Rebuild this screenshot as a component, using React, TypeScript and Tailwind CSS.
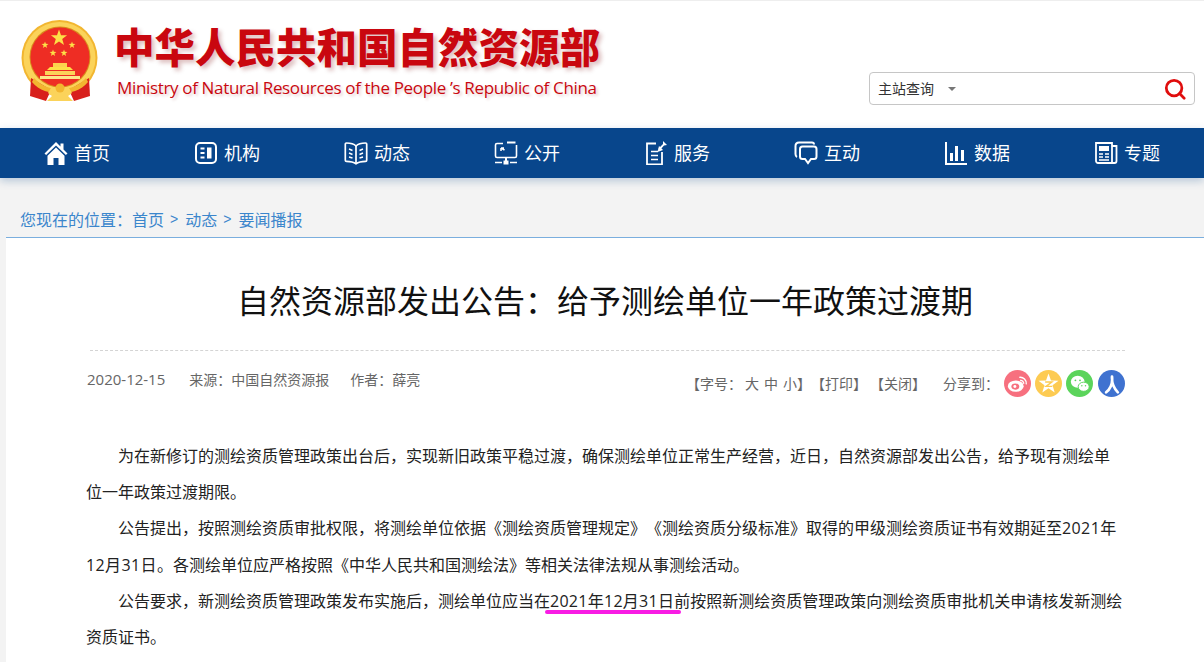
import React from 'react';

const cjk = "font-['Noto_Sans_CJK_SC','Noto_Sans',sans-serif]";
const latinFirst = "font-['Open_Sans','Noto_Sans_CJK_SC',sans-serif]";

const Star = ({ x, y, r, fill = '#fde047' }: { x: number; y: number; r: number; fill?: string }) => {
  const pts: string[] = [];
  for (let i = 0; i < 10; i++) {
    const rad = i % 2 === 0 ? r : r * 0.4;
    const a = (Math.PI / 5) * i - Math.PI / 2;
    pts.push(`${(x + rad * Math.cos(a)).toFixed(2)},${(y + rad * Math.sin(a)).toFixed(2)}`);
  }
  return <polygon points={pts.join(' ')} fill={fill} />;
};

const Emblem = () => (
  <svg viewBox="10 10 80 82" className="w-[80px] h-[82px] shrink-0">
    <circle cx="49.500" cy="48" r="38" fill="#f2b630" />
    <circle cx="49.500" cy="48" r="36" fill="#fbd35a" />
    <circle cx="50" cy="47" r="30.500" fill="#d98a1c" />
    <circle cx="50" cy="47" r="29.500" fill="#ee2d24" />
    <Star x={49} y={28} r={8.500} />
    <Star x={35} y={35} r={3.600} />
    <Star x={62} y={35} r={3.600} />
    <Star x={43} y={43} r={3.600} />
    <Star x={54} y={43} r={3.600} />
    {/* gate */}
    <path d="M40 57h20l3 3H37z" fill="#fde047" />
    <rect x="43" y="53" width="14" height="4" fill="#fcd34d" />
    <path d="M35 61h30v4H35z" fill="#fbd35a" />
    <path d="M30 66h40v3H30z" fill="#fde68a" />
    {/* drape */}
    <path d="M21 68l-1 18 16 5 5-11z" fill="#d8201c" />
    <path d="M79 68l1 18-16 5-5-11z" fill="#d8201c" />
    <path d="M24 68c8 9 18 11 26 11s18-2 26-11l2 4c-7 9-18 11-28 11s-21-2-28-11z" fill="#f2b630" />
    <path d="M41 78h18l3 5-4 3 5 5H37l5-5-4-3z" fill="#fbd35a" />
    <circle cx="50" cy="78" r="4.500" fill="#f2b630" />
  </svg>
);

const iconBase = 'w-[24px] h-[24px] shrink-0';

const HomeIcon = () => (
  <svg viewBox="0 0 24 24" className={iconBase} fill="#fff">
    <path d="M12 1L0.500 12.500l1.600 1.600L12 4.400l9.900 9.700 1.600-1.600L19.500 8.600V2.500h-3v3.100z" />
    <path d="M12 6.500L3.500 14.800V24h6v-7h5v7h6v-9.200z" />
  </svg>
);
const OrgIcon = () => (
  <svg viewBox="0 0 24 24" className={iconBase} fill="none" stroke="#fff" strokeWidth="2">
    <rect x="2" y="2" width="20" height="20" rx="4" />
    <path d="M6.500 7.500h4M6.500 12h4M6.500 16.500h4" strokeWidth="2.200" />
    <rect x="13" y="6.500" width="4.500" height="11" fill="#fff" stroke="none" />
  </svg>
);
const BookIcon = () => (
  <svg viewBox="0 0 24 24" className={iconBase} fill="none" stroke="#fff" strokeWidth="1.700">
    <path d="M12 5C10 3 6 2 2.500 2c-.8 0-1.200.5-1.200 1.200v16c0 .8.400 1.200 1.200 1.200 3.500 0 7 .6 9.500 2.400 2.500-1.800 6-2.400 9.500-2.400.8 0 1.200-.4 1.200-1.200v-16c0-.7-.4-1.200-1.200-1.200C18 2 14 3 12 5z" />
    <path d="M12 5v18" />
    <path d="M5 8l3.500 1.500M5 12l3.500 1.500M5 16l3.500 1M19 8l-3.500 1.500M19 12l-3.500 1.500M19 16l-3.500 1" strokeWidth="1.400" />
  </svg>
);
const OpenIcon = () => (
  <svg viewBox="0 0 24 24" className={iconBase} fill="none" stroke="#fff" strokeWidth="1.600">
    <path d="M9 2.500H3a1.500 1.500 0 0 0-1.500 1.500v11A1.500 1.500 0 0 0 3 16.500h18a1.500 1.500 0 0 0 1.500-1.500V4" />
    <path d="M13 1.500h8.500" strokeWidth="2" />
    <path d="M7 7l3.500 2M7 7v3M7 7h3" strokeWidth="1.500" />
    <path d="M12 16.500v4" strokeWidth="2" />
    <rect x="9.500" y="19.500" width="5" height="4" fill="#fff" stroke="none" />
    <path d="M1 21.500h7M16 21.500h7" strokeWidth="1.300" />
  </svg>
);
const ServiceIcon = () => (
  <svg viewBox="0 0 24 24" className={iconBase} fill="none" stroke="#fff" strokeWidth="1.800">
    <path d="M12 2.500H3v21h15V11" />
    <path d="M7 10.500h7M7 14.500h7M7 18.500h7" strokeWidth="1.700" />
    <path d="M19 0l4 4-3 .5-4 4.500-1.500-1.500L19 3z" fill="#fff" stroke="none" />
    <path d="M15 5l4 4-5.500 2z" fill="#fff" stroke="none" />
  </svg>
);
const ChatIcon = () => (
  <svg viewBox="0 0 24 24" className={iconBase} fill="none" stroke="#fff" strokeWidth="2">
    <path d="M20 3.500C20 2 19 1.500 18 1.500H5C2.500 1.500 1.500 3 1.500 5v8c0 1.500.5 2.500 1.500 3" />
    <path d="M8.500 5.500h11.500c1.500 0 2.500 1 2.500 2.500v7.500c0 1.500-1 2.500-2.500 2.500H17l-3 4-3-4H8.500C7 18 6 17 6 15.500V8c0-1.500 1-2.500 2.500-2.500z" />
  </svg>
);
const ChartIcon = () => (
  <svg viewBox="0 0 24 24" className={iconBase} fill="#fff">
    <rect x="1" y="1" width="2" height="23" />
    <rect x="1" y="22" width="22" height="2" />
    <rect x="6" y="12" width="3" height="8" />
    <rect x="11" y="5" width="3" height="15" />
    <rect x="17" y="9" width="3" height="11" />
  </svg>
);
const PaperIcon = () => (
  <svg viewBox="0 0 24 24" className={iconBase} fill="none" stroke="#fff" strokeWidth="1.800">
    <path d="M2 2h16v20H4a2 2 0 0 1-2-2z" />
    <path d="M18 5h4.500v15a2 2 0 0 1-2 2H18" />
    <rect x="5" y="5" width="10" height="5" fill="#fff" stroke="none" />
    <path d="M5 13h4M11 13h4M5 16h4M11 16h4M5 19h10" strokeWidth="1.500" />
  </svg>
);

const navItems = [
  { label: '首页', icon: <HomeIcon /> },
  { label: '机构', icon: <OrgIcon /> },
  { label: '动态', icon: <BookIcon /> },
  { label: '公开', icon: <OpenIcon /> },
  { label: '服务', icon: <ServiceIcon /> },
  { label: '互动', icon: <ChatIcon /> },
  { label: '数据', icon: <ChartIcon /> },
  { label: '专题', icon: <PaperIcon /> },
];

const ShareIcons = () => (
  <div className="flex items-center gap-[4px] ml-[5px]">
    <span className="w-[27px] h-[27px] rounded-full bg-[#f7707f] flex items-center justify-center">
      <svg viewBox="0 0 24 24" className="w-[21px] h-[21px]">
        <ellipse cx="10" cy="15" rx="9" ry="6.500" fill="#fff" />
        <ellipse cx="9.500" cy="15.500" rx="4.500" ry="3.500" fill="#f7707f" />
        <circle cx="9" cy="15.500" r="1.700" fill="#fff" />
        <path d="M14 5a7 7 0 0 1 8 8M15 8.500a3.500 3.500 0 0 1 4 4" fill="none" stroke="#fff" strokeWidth="1.600" />
      </svg>
    </span>
    <span className="w-[27px] h-[27px] rounded-full bg-[#fdcb52] flex items-center justify-center">
      <svg viewBox="0 0 24 24" className="w-[23px] h-[23px]">
        <Star x={12} y={12.500} r={11} fill="#fff" />
        <path d="M8.500 10.500h7l-6 4.500h6.500" fill="none" stroke="#fdcb52" strokeWidth="1.500" />
      </svg>
    </span>
    <span className="w-[27px] h-[27px] rounded-full bg-[#5bd45b] flex items-center justify-center">
      <svg viewBox="0 0 24 24" className="w-[22px] h-[22px]">
        <ellipse cx="9.500" cy="9.500" rx="7.500" ry="6.500" fill="#fff" />
        <ellipse cx="16" cy="15" rx="6" ry="5" fill="#fff" stroke="#5bd45b" strokeWidth="1" />
        <circle cx="7" cy="8" r="1" fill="#5bd45b" />
        <circle cx="12" cy="8" r="1" fill="#5bd45b" />
        <circle cx="14" cy="14" r=".8" fill="#5bd45b" />
        <circle cx="18" cy="14" r=".8" fill="#5bd45b" />
      </svg>
    </span>
    <span className="w-[27px] h-[27px] rounded-full bg-[#3f72d0] flex items-center justify-center ml-[1px]">
      <svg viewBox="0 0 24 24" className="w-[20px] h-[20px]">
        <path d="M12 3c1 8-1 14-7 19M12 3c-.5 8 2 14 7 19" fill="none" stroke="#fff" strokeWidth="3.200" strokeLinecap="round" />
      </svg>
    </span>
  </div>
);

export default function App() {
  return (
    <div className={`w-full h-[662px] overflow-hidden bg-[#f3f3f3] ${cjk}`}>
      {/* Header */}
      <div className="h-[128px] bg-white border-t border-[#eeeeee] flex items-start pl-[20px] pr-[9px]">
        <div className="mt-[19px]"><Emblem /></div>
        <div className="ml-[14px] mt-[17px] flex flex-col">
          <div className="text-[40.500px] leading-[56px] font-black text-[#c9070f] whitespace-nowrap [text-shadow:3px_3px_4px_rgba(120,0,0,0.25)]">
            中华人民共和国自然资源部
          </div>
          <div className="text-[17px] tracking-[-0.34px] leading-[24px] mt-[2px] ml-[3px] font-['Open_Sans',sans-serif] text-[#c9070f] whitespace-nowrap [text-shadow:2px_2px_3px_rgba(120,0,0,0.2)]">
            Ministry of Natural Resources of the People ’s Republic of China
          </div>
        </div>
        <div className="ml-auto mt-[71px] w-[326px] h-[33px] border border-[#c6c6c6] rounded-[4px] flex items-center pl-[8px] pr-[8px] text-[14px] text-[#333]">
          <span>主站查询</span>
          <span className="ml-[14px] w-0 h-0 border-x-[4px] border-x-transparent border-t-[4px] border-t-[#777]" />
          <svg viewBox="0 0 24 24" className="ml-auto w-[22px] h-[22px]" fill="none" stroke="#e00d0d" strokeWidth="3">
            <circle cx="11" cy="11" r="8.500" />
            <path d="M17 17l5 5" strokeLinecap="round" />
          </svg>
        </div>
      </div>

      {/* Nav */}
      <div className="h-[50px] bg-[#08468c] flex items-center pl-[44px] shadow-[0_3px_8px_rgba(8,70,140,0.25)] relative">
        {navItems.map(item => (
          <div key={item.label} className="w-[150px] shrink-0 last:w-auto flex items-center gap-[6px] text-white text-[18px]">
            {item.icon}
            <span className="mb-[2px]">{item.label}</span>
          </div>
        ))}
      </div>

      {/* Breadcrumb */}
      <div className="h-[59px] flex items-end pl-[20px] pb-[6px] text-[16px] leading-[24px] text-[#3b86cc]">
        <span>您现在的位置：</span>
        <span>首页</span>
        <span className="ml-[6px] mr-[7px] font-['Liberation_Sans',sans-serif] text-[14px]">&gt;</span>
        <span>动态</span>
        <span className="ml-[6px] mr-[7px] font-['Liberation_Sans',sans-serif] text-[14px]">&gt;</span>
        <span>要闻播报</span>
      </div>

      {/* Article */}
      <div className="ml-[6px] h-[500px] bg-white border-t border-[#7aaede] pl-[80px] pr-[79px]">
        <h1 className="text-[32px] leading-[44px] font-normal text-[#111] text-center mt-[39px] -ml-[80px] -mr-[79px]">
          自然资源部发出公告：给予测绘单位一年政策过渡期
        </h1>
        <div className="mt-[29px] ml-[4px] border-t border-dashed border-[#d4d4d4]" />
        <div className="mt-[19px] flex items-center justify-between text-[14px] text-[#666] h-[27px]">
          <div className="flex items-center mb-[8px]">
            <span className="text-[15px] ml-[1px] font-['Open_Sans',sans-serif]">2020-12-15</span>
            <span className="ml-[24px]">来源：中国自然资源报</span>
            <span className="ml-[21px]">作者：薛亮</span>
          </div>
          <div className="flex items-center whitespace-nowrap">
            <span>【字号：</span>
            <span className="ml-[3px]">大</span>
            <span className="ml-[5px]">中</span>
            <span className="ml-[5px]">小</span>
            <span>】</span>
            <span>【打印】</span>
            <span className="ml-[3px]">【关闭】</span>
            <span className="ml-[17px]">分享到：</span>
            <ShareIcons />
          </div>
        </div>
        <div className={`mt-[41px] text-[16px] leading-[36.200px] text-[#222] [text-spacing-trim:space-all] ${latinFirst}`}>
          <p className="indent-[32px]">为在新修订的测绘资质管理政策出台后，实现新旧政策平稳过渡，确保测绘单位正常生产经营，近日，自然资源部发出公告，给予现有测绘单位一年政策过渡期限。</p>
          <p className="indent-[32px]">公告提出，按照测绘资质审批权限，将测绘单位依据《测绘资质管理规定》《测绘资质分级标准》取得的甲级测绘资质证书有效期延至<span className="tracking-[0.4px]">2021年12月31日</span>。各测绘单位应严格按照《中华人民共和国测绘法》等相关法律法规从事测绘活动。</p>
          <p className="indent-[32px]">公告要求，新测绘资质管理政策发布实施后，测绘单位应当在<span className="relative tracking-[0.27px]">2021年12月31日<span className="absolute left-[-5px] right-[-7px] top-[20px] h-[4px] rounded-full bg-[#f81ce4]" /></span>前按照新测绘资质管理政策向测绘资质审批机关申请核发新测绘资质证书。</p>
        </div>
      </div>
    </div>
  );
}
